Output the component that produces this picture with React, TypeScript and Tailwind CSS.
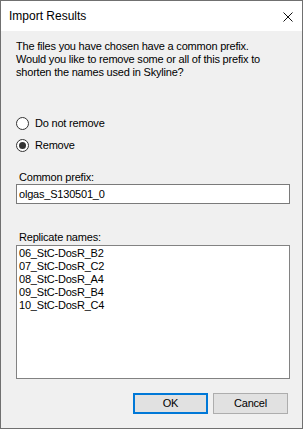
import { useState } from "react";

const REPLICATES = [
  "06_StC-DosR_B2",
  "07_StC-DosR_C2",
  "08_StC-DosR_A4",
  "09_StC-DosR_B4",
  "10_StC-DosR_C4",
];

function Radio({ checked, label, onClick }: { checked: boolean; label: string; onClick: () => void }) {
  return (
    <button type="button" onClick={onClick} className="flex h-[13px] items-center gap-[6px] text-left">
      <span className="flex h-[13px] w-[13px] items-center justify-center rounded-full border border-[#333333] bg-white">
        {checked ? <span className="h-[7px] w-[7px] rounded-full bg-[#333333]" /> : null}
      </span>
      <span className="leading-[13px]">{label}</span>
    </button>
  );
}

export default function App() {
  const [mode, setMode] = useState<"keep" | "remove">("remove");
  const [prefix, setPrefix] = useState("olgas_S130501_0");

  return (
    <div
      className="flex h-[429px] w-[303px] flex-col border border-[#707070] bg-[#f0f0f0] text-[11px] tracking-[-0.2px] text-black"
      style={{ fontFamily: '"Liberation Sans", Arial, sans-serif' }}
    >
      {/* title bar */}
      <div className="flex h-[30px] shrink-0 items-center justify-between bg-white pl-[8px] pr-[9px]">
        <span className="text-[12px] tracking-normal">Import Results</span>
        <svg width="10" height="10" viewBox="0 0 10 10" className="mt-[1px]">
          <path d="M0.5 0.5 L9.5 9.5 M9.5 0.5 L0.5 9.5" stroke="#111" strokeWidth="1" fill="none" />
        </svg>
      </div>

      <div className="flex flex-1 flex-col px-[15px] pt-[9px]">
        <p className="leading-[13px]">
          The files you have chosen have a common prefix.
          <br />
          Would you like to remove some or all of this prefix to
          <br />
          shorten the names used in Skyline?
        </p>

        <div className="mt-[38px] flex flex-col gap-[8.5px]">
          <Radio checked={mode === "keep"} label="Do not remove" onClick={() => setMode("keep")} />
          <Radio checked={mode === "remove"} label="Remove" onClick={() => setMode("remove")} />
        </div>

        <div className="mt-[19px] pl-[3px] leading-[13px]">Common prefix:</div>
        <input
          value={prefix}
          onChange={(e) => setPrefix(e.target.value)}
          className="mt-[0px] h-[20px] w-[274px] border border-[#7a7a7a] bg-white px-[2px] text-[11px] tracking-[-0.2px] outline-none"
        />

        <div className="mt-[27px] pl-[3px] leading-[13px]">Replicate names:</div>
        <div className="mt-[1px] h-[134px] w-[274px] border border-[#828282] bg-white px-[2px] pt-[1px]">
          {REPLICATES.map((r) => (
            <div key={r} className="leading-[13px]">
              {r}
            </div>
          ))}
        </div>

        <div className="mt-[14px] flex justify-end gap-[5px]">
          <button type="button" className="h-[21px] w-[75px] border-2 border-[#0078d7] bg-[#e1e1e1]">
            OK
          </button>
          <button type="button" className="mr-[-1px] h-[21px] w-[75px] border border-[#adadad] bg-[#e1e1e1]">
            Cancel
          </button>
        </div>
      </div>
    </div>
  );
}
